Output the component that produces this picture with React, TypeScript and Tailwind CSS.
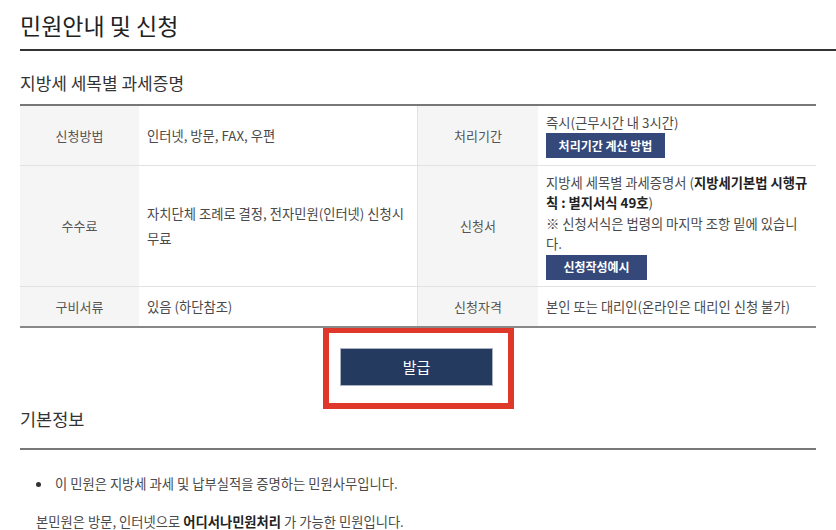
export default function App() {
  const th =
    "flex items-center justify-center bg-[#f5f5f5] text-[#555] text-[13px] border-b border-[#e2e2e2]";
  const td = "flex items-center pl-[8px] pr-[4px] text-[#4a4a4a] text-[13.3px] border-b border-[#e2e2e2]";
  const btn =
    "flex items-center justify-center h-[25px] bg-[#34487a] text-white text-[12px] font-bold whitespace-nowrap";
  return (
    <div className="w-[836px] h-[530px] overflow-hidden bg-white font-['Noto_Sans_CJK_KR','Noto_Sans',sans-serif] text-[#444]">
      <div className="pl-[20px]">
        <h1 className="pt-[10px] pb-[9px] border-b-2 border-[#333] text-[23px] leading-[30px] text-[#222] font-normal">
          민원안내 및 신청
        </h1>
        <div className="mr-[20px]">
          <h2 className="mt-[22px] mb-[11px] text-[17px] leading-[20px] text-[#333] font-normal">
            지방세 세목별 과세증명
          </h2>

          <div className="grid grid-cols-[119px_278px_121px_278px] grid-rows-[60px_121px_39px] border-t-2 border-b-2 border-t-[#777] border-b-[#888]">
            <div className={th}>신청방법</div>
            <div className={td}>
              <span className="leading-[20px] whitespace-nowrap">인터넷, 방문, FAX, 우편</span>
            </div>
            <div className={`${th} border-l border-l-[#e2e2e2]`}>처리기간</div>
            <div className={`${td} pl-[6px]`}>
              <div className="flex flex-col">
                <span className="leading-[20px] whitespace-nowrap">즉시(근무시간 내 3시간)</span>
                <span className={`${btn} w-[119px]`}>처리기간 계산 방법</span>
              </div>
            </div>

            <div className={th}>수수료</div>
            <div className={td}>
              <div className="flex flex-col leading-[25px] whitespace-nowrap">
                <span>자치단체 조례로 결정, 전자민원(인터넷) 신청시</span>
                <span>무료</span>
              </div>
            </div>
            <div className={`${th} border-l border-l-[#e2e2e2]`}>신청서</div>
            <div className={`${td} pl-[6px]`}>
              <div className="flex flex-col">
                <div className="flex flex-col leading-[20.5px] whitespace-nowrap">
                  <span>
                    지방세 세목별 과세증명서 (<b className="font-bold text-[#222]">지방세기본법 시행규</b>
                  </span>
                  <span>
                    <b className="font-bold text-[#222]">칙 : 별지서식 49호</b>)
                  </span>
                  <span>※ 신청서식은 법령의 마지막 조항 밑에 있습니</span>
                  <span>다.</span>
                </div>
                <span className={`${btn} w-[101px]`}>신청작성예시</span>
              </div>
            </div>

            <div className={`${th} border-b-0`}>구비서류</div>
            <div className={`${td} border-b-0`}>
              <span className="leading-[20px] whitespace-nowrap">있음 (하단참조)</span>
            </div>
            <div className={`${th} border-b-0 border-l border-l-[#e2e2e2]`}>신청자격</div>
            <div className={`${td} border-b-0 pl-[6px]`}>
              <span className="leading-[20px] whitespace-nowrap">본인 또는 대리인(온라인은 대리인 신청 불가)</span>
            </div>
          </div>

          <div className="flex justify-center pl-[1px]">
            <div className="border-[6px] border-t-[5px] border-[#e0372b] pl-[11px] pr-[15px] pt-[15px] pb-[17px]">
              <button className="w-[153px] h-[38px] bg-[#253a5f] border border-[#a9b1c2] text-white text-[15px] flex items-center justify-center">
                발급
              </button>
            </div>
          </div>

          <h2 className="text-[17.5px] leading-[20px] pb-[19px] border-b-2 border-[#777] text-[#333] font-normal">
            기본정보
          </h2>

          <div className="pl-[16px] text-[13.3px] text-[#4a4a4a]">
            <div className="mt-[24px] flex items-center h-[20px] leading-[20px] whitespace-nowrap">
              <span className="w-[5px] h-[5px] rounded-full bg-[#333] mr-[14px]" />
              <span>이 민원은 지방세 과세 및 납부실적을 증명하는 민원사무입니다.</span>
            </div>
            <p className="mt-[18px] leading-[20px] whitespace-nowrap">
              본민원은 방문, 인터넷으로 <b className="font-bold text-[#222]">어디서나민원처리</b> 가 가능한 민원입니다.
            </p>
          </div>
        </div>
      </div>
    </div>
  );
}
